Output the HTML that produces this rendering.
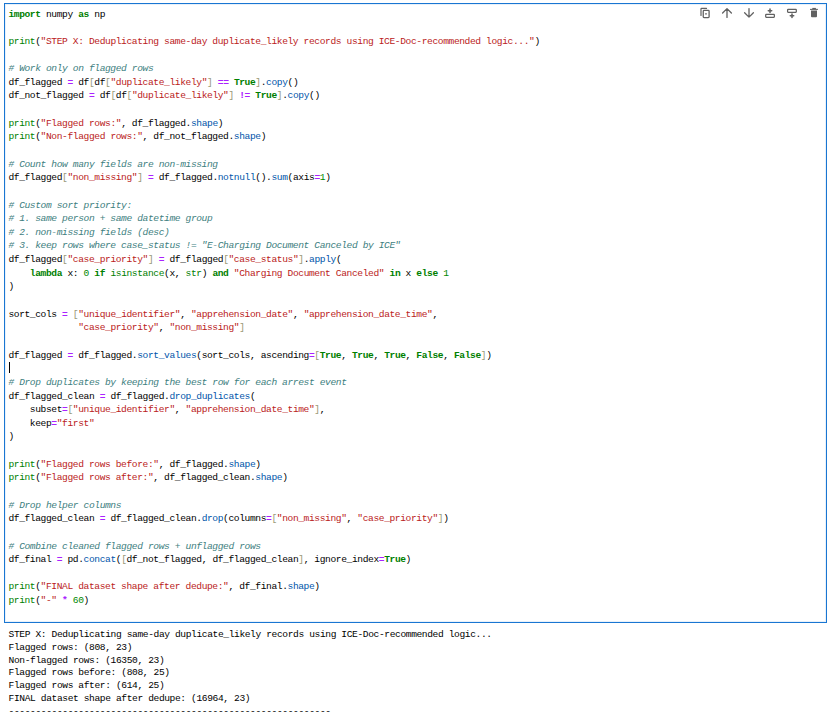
<!DOCTYPE html>
<html><head><meta charset="utf-8">
<style>
html,body{margin:0;padding:0;background:#fff;width:832px;height:722px;overflow:hidden;position:relative}
.cell{position:absolute;left:4px;top:3px;width:821px;height:618px;border:1px solid #1976d2;background:#fff;box-shadow:inset 0 0 0 1px rgba(25,118,210,0.1)}
pre{margin:0;font-family:"Liberation Mono",monospace;font-size:9.6px;letter-spacing:-0.39px;color:#000;white-space:pre}
.code{position:absolute;left:8.4px;top:7.57px;line-height:13.640625px}
.out{position:absolute;left:8.6px;top:629px;line-height:12.75px}
.k{color:#008000;font-weight:bold}
.b{color:#008000}
.s{color:#ba2121}
.c{color:#408080;font-style:italic}
.n{color:#008800}
.o{color:#aa22ff;font-weight:bold}
.p{color:#999977}
.a{color:#0055aa}
.cursor{position:absolute;left:9px;top:362px;width:1px;height:11px;background:#000}
.tb{position:absolute;top:0;left:0}
</style></head><body>
<div class="cell"></div>
<pre class="code"><span class="k">import</span> numpy <span class="k">as</span> np

<span class="b">print</span>(<span class="s">"STEP X: Deduplicating same-day duplicate_likely records using ICE-Doc-recommended logic..."</span>)

<span class="c"># Work only on flagged rows</span>
df_flagged <span class="o">=</span> df<span class="p">[</span>df<span class="p">[</span><span class="s">"duplicate_likely"</span><span class="p">]</span> <span class="o">==</span> <span class="k">True</span><span class="p">]</span>.<span class="a">copy</span>()
df_not_flagged <span class="o">=</span> df<span class="p">[</span>df<span class="p">[</span><span class="s">"duplicate_likely"</span><span class="p">]</span> <span class="o">!=</span> <span class="k">True</span><span class="p">]</span>.<span class="a">copy</span>()

<span class="b">print</span>(<span class="s">"Flagged rows:"</span>, df_flagged.<span class="a">shape</span>)
<span class="b">print</span>(<span class="s">"Non-flagged rows:"</span>, df_not_flagged.<span class="a">shape</span>)

<span class="c"># Count how many fields are non-missing</span>
df_flagged<span class="p">[</span><span class="s">"non_missing"</span><span class="p">]</span> <span class="o">=</span> df_flagged.<span class="a">notnull</span>().<span class="a">sum</span>(axis<span class="o">=</span><span class="n">1</span>)

<span class="c"># Custom sort priority:</span>
<span class="c"># 1. same person + same datetime group</span>
<span class="c"># 2. non-missing fields (desc)</span>
<span class="c"># 3. keep rows where case_status != "E-Charging Document Canceled by ICE"</span>
df_flagged<span class="p">[</span><span class="s">"case_priority"</span><span class="p">]</span> <span class="o">=</span> df_flagged<span class="p">[</span><span class="s">"case_status"</span><span class="p">]</span>.<span class="a">apply</span>(
    <span class="k">lambda</span> x: <span class="n">0</span> <span class="k">if</span> <span class="b">isinstance</span>(x, <span class="b">str</span>) <span class="k">and</span> <span class="s">"Charging Document Canceled"</span> <span class="k">in</span> x <span class="k">else</span> <span class="n">1</span>
)

sort_cols <span class="o">=</span> <span class="p">[</span><span class="s">"unique_identifier"</span>, <span class="s">"apprehension_date"</span>, <span class="s">"apprehension_date_time"</span>,
             <span class="s">"case_priority"</span>, <span class="s">"non_missing"</span><span class="p">]</span>

df_flagged <span class="o">=</span> df_flagged.<span class="a">sort_values</span>(sort_cols, ascending<span class="o">=</span><span class="p">[</span><span class="k">True</span>, <span class="k">True</span>, <span class="k">True</span>, <span class="k">False</span>, <span class="k">False</span><span class="p">]</span>)

<span class="c"># Drop duplicates by keeping the best row for each arrest event</span>
df_flagged_clean <span class="o">=</span> df_flagged.<span class="a">drop_duplicates</span>(
    subset<span class="o">=</span><span class="p">[</span><span class="s">"unique_identifier"</span>, <span class="s">"apprehension_date_time"</span><span class="p">]</span>,
    keep<span class="o">=</span><span class="s">"first"</span>
)

<span class="b">print</span>(<span class="s">"Flagged rows before:"</span>, df_flagged.<span class="a">shape</span>)
<span class="b">print</span>(<span class="s">"Flagged rows after:"</span>, df_flagged_clean.<span class="a">shape</span>)

<span class="c"># Drop helper columns</span>
df_flagged_clean <span class="o">=</span> df_flagged_clean.<span class="a">drop</span>(columns<span class="o">=</span><span class="p">[</span><span class="s">"non_missing"</span>, <span class="s">"case_priority"</span><span class="p">]</span>)

<span class="c"># Combine cleaned flagged rows + unflagged rows</span>
df_final <span class="o">=</span> pd.<span class="a">concat</span>(<span class="p">[</span>df_not_flagged, df_flagged_clean<span class="p">]</span>, ignore_index<span class="o">=</span><span class="k">True</span>)

<span class="b">print</span>(<span class="s">"FINAL dataset shape after dedupe:"</span>, df_final.<span class="a">shape</span>)
<span class="b">print</span>(<span class="s">"-"</span> <span class="o">*</span> <span class="n">60</span>)</pre>
<div class="cursor"></div>
<pre class="out">STEP X: Deduplicating same-day duplicate_likely records using ICE-Doc-recommended logic...
Flagged rows: (808, 23)
Non-flagged rows: (16350, 23)
Flagged rows before: (808, 25)
Flagged rows after: (614, 25)
FINAL dataset shape after dedupe: (16964, 23)
------------------------------------------------------------</pre>
<svg class="tb" width="832" height="30" viewBox="0 0 832 30">
<g fill="none" stroke="#616161" stroke-linecap="round" stroke-linejoin="round">
<path d="M701 15.4V8.9Q701 8.4 701.5 8.4H706.5" stroke-width="1.2"/>
<rect x="703.25" y="10.45" width="5.85" height="7.15" rx="0.8" stroke-width="1.3"/>
<path d="M722.6 13L727 8.6L731.4 13M727 9V17.4" stroke-width="1.3"/>
<path d="M749 8.6V17M744.6 12.8L749 17.1L753.4 12.8" stroke-width="1.3"/>
<path d="M768.3 10.8H771.7M770 9.1V12.5" stroke-width="1.55"/>
<rect x="765.7" y="14.45" width="8.65" height="2.85" rx="0.5" stroke-width="1.25"/>
<rect x="787.6" y="9.45" width="8.7" height="2.85" rx="0.5" stroke-width="1.25"/>
<path d="M790.3 15.8H793.7M792 14.1V17.5" stroke-width="1.55"/>
</g>
<g fill="#616161">
<circle cx="706" cy="13.8" r="0.85"/>
<rect x="812.3" y="7.9" width="3.6" height="1.2"/>
<rect x="810" y="8.85" width="7.9" height="1.05"/>
<path d="M811 10.6H817V16.3Q817 17.3 816 17.3H812Q811 17.3 811 16.3Z"/>
</g>
</svg>
</body></html>
